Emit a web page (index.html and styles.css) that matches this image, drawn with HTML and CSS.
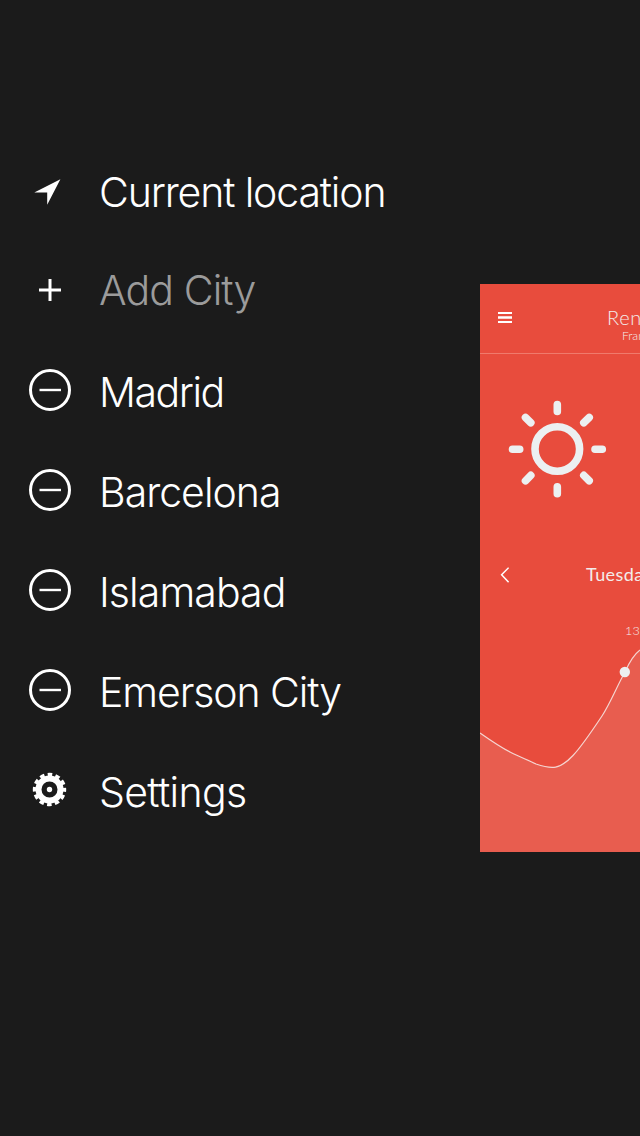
FILE: index.html
```html
<!DOCTYPE html>
<html lang="en">
<head>
<meta charset="utf-8">
<title>Weather menu</title>
<link rel="stylesheet" href="styles.css">
</head>
<body>
<nav class="menu">
  <a class="item item-first"><svg class="icon" viewBox="0 0 60 50"><path d="M40.4 12.3 27.2 37.7V25.6L14.3 25.4Z"/></svg><span class="label current">Current location</span></a>
  <a class="item item-add"><svg class="icon" viewBox="0 0 60 50"><path d="M19 25H41M30 14V36" class="line"/></svg><span class="label add">Add City</span></a>
  <a class="item"><svg class="icon" viewBox="0 0 60 50"><circle cx="30" cy="25" r="19.5" class="line"/><path d="M19.5 25H41" class="line thin"/></svg><span class="label madrid">Madrid</span></a>
  <a class="item"><svg class="icon" viewBox="0 0 60 50"><circle cx="30" cy="25" r="19.5" class="line"/><path d="M19.5 25H41" class="line thin"/></svg><span class="label barcelona">Barcelona</span></a>
  <a class="item"><svg class="icon" viewBox="0 0 60 50"><circle cx="30" cy="25" r="19.5" class="line"/><path d="M19.5 25H41" class="line thin"/></svg><span class="label islamabad">Islamabad</span></a>
  <a class="item"><svg class="icon" viewBox="0 0 60 50"><circle cx="30" cy="25" r="19.5" class="line"/><path d="M19.5 25H41" class="line thin"/></svg><span class="label emerson">Emerson City</span></a>
  <a class="item"><svg class="icon" viewBox="0 0 60 50"><circle cx="29.5" cy="24.5" r="11" class="gear-ring"/><circle cx="29.5" cy="24.5" r="15" class="gear-teeth"/><circle cx="29.5" cy="24.5" r="2.7"/></svg><span class="label settings">Settings</span></a>
</nav>
<main class="card">
  <header class="head">
    <svg class="burger" viewBox="0 0 14 11"><path d="M0 0H14V2H0ZM0 4.2H14V6.8H0ZM0 9H14V11H0Z"/></svg>
    <div class="place"><div class="town">Rennes</div><div class="country">France</div></div>
  </header>
  <svg class="sun" viewBox="508 400 99 99">
    <circle cx="557.3" cy="449" r="22.3"/>
    <path d="M557.3 404.5V411.5M557.3 486.7V493.7M512.5 449.3H519.7M595 449.3H602.3M525.5 417.5 530.8 422.8M589.2 417.5 583.8 422.8M525.5 480.8 530.8 475.4M589.2 480.8 583.8 475.4"/>
  </svg>
  <div class="day">
    <svg class="prev" viewBox="0 0 9 16"><path d="M8.6 .7 1.6 7.8 8.6 15.2"/></svg>
    <span class="day-name">Tuesday</span>
  </div>
  <div class="temp">13</div>
  <svg class="chart" viewBox="480 640 160 212">
    <path class="area" d="M480 733C490 740 500 747 510 752C520 757 528 760 536 764C552 769.5 560 769.5 573 755.5C582 746 594 728 602 716C611 702 617 686 625 672Q632 656 640 650V852H480Z"/>
    <path class="curve" d="M480 733C490 740 500 747 510 752C520 757 528 760 536 764C552 769.5 560 769.5 573 755.5C582 746 594 728 602 716C611 702 617 686 625 672Q632 656 640 650"/>
    <circle class="dot" cx="624.8" cy="672" r="5.2"/>
  </svg>
</main>
</body>
</html>
```
FILE: styles.css
```css
* { box-sizing: border-box; }
body {
  margin: 0;
  width: 640px;
  height: 1136px;
  display: flex;
  align-items: flex-start;
  overflow: hidden;
  background: #1b1b1b;
  color: #fff;
  font-family: Inter, "Liberation Sans", sans-serif;
}
.menu { width: 480px; padding-top: 143px; }
.item { display: flex; align-items: center; height: 100px; padding-left: 20px; }
.item-first { height: 98px; }
.item-add { height: 98px; }
.item-add + .item { margin-top: 1px; }
.icon { width: 60px; height: 50px; margin-right: 19px; fill: #fff; flex: none; }
.line { fill: none; stroke: #fff; stroke-width: 3; }
.thin { stroke-width: 2.4; }
.gear-ring { fill: none; stroke: #fff; stroke-width: 6; }
.gear-teeth { fill: none; stroke: #fff; stroke-width: 3.4; stroke-dasharray: 4.6 3.254; stroke-dashoffset: 2.3; }
.label { font-size: 41px; font-weight: 300; line-height: 50px; white-space: nowrap; padding-top: 3px; letter-spacing: -0.9px; }
.current, .add { padding: 0; margin-top: -1px; }
.add { color: #9b9b9b; }
.current { letter-spacing: -1.15px; }
.madrid { letter-spacing: -1.45px; }
.barcelona { letter-spacing: -1px; }
.emerson { letter-spacing: -1.1px; }
.settings { letter-spacing: -0.65px; }

.card {
  width: 160px;
  height: 568px;
  margin-top: 284px;
  overflow: hidden;
  background: #e84c3d;
  display: flex;
  flex-direction: column;
  font-family: Lato, sans-serif;
  color: #f3eceb;
}
.head { display: flex; height: 70px; flex: none; border-bottom: 1px solid #f07a6c; padding-left: 18px; }
.burger { width: 14px; height: 11px; margin-top: 28px; fill: #fff; flex: none; }
.place { margin: 21px 0 0 95px; }
.town { font-size: 20px; font-weight: 300; line-height: 24px; letter-spacing: .7px; }
.country { font-size: 12px; font-weight: 300; line-height: 14px; padding-left: 15px; }
.sun { width: 99px; height: 99px; margin: 46px 0 0 28px; flex: none; fill: none; stroke: #ecf0f1; stroke-width: 7.6; stroke-linecap: round; }
.day { display: flex; align-items: center; height: 30px; margin-top: 61px; padding-left: 20px; flex: none; }
.prev { width: 9px; height: 16px; flex: none; fill: none; stroke: #fff; stroke-width: 1.5; }
.day-name { margin: -2px 0 0 77px; font-size: 18px; letter-spacing: .4px; }
.temp { height: 17px; margin: 33px 0 0 145px; font-size: 12.5px; line-height: 16px; font-weight: 300; letter-spacing: .2px; flex: none; }
.chart { width: 160px; height: 212px; flex: none; }
.area { fill: #e85d4f; }
.curve { fill: none; stroke: #f5d5d1; stroke-width: 1.2; }
.dot { fill: #ecf0f1; }
```
